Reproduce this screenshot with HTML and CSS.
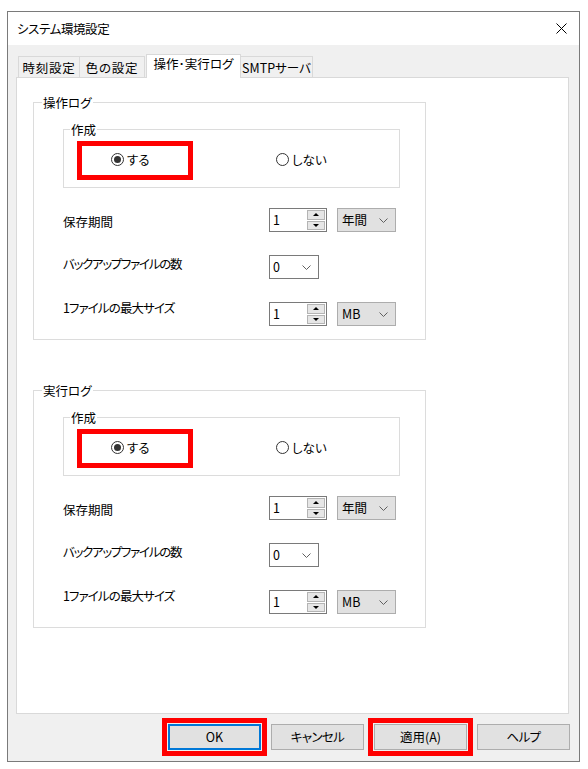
FILE: index.html
```html
<!DOCTYPE html>
<html lang="ja">
<head>
<meta charset="utf-8">
<title>システム環境設定</title>
<link rel="stylesheet" href="styles.css">
</head>
<body>
<div class="window">
  <div class="titlebar">
    <span class="title">システム環境設定</span>
    <svg class="close" width="11" height="11" viewBox="0 0 11 11"><path d="M0.5 0.5 L10.5 10.5 M10.5 0.5 L0.5 10.5" stroke="#000" stroke-width="1" fill="none"/></svg>
  </div>
  <div class="body">
    <div class="tabs">
      <div class="tab tab1">時刻設定</div>
      <div class="tab tab2">色の設定</div>
      <div class="tab active">操作･実行ログ</div>
      <div class="tab tab4">SMTPサーバ</div>
    </div>
    <div class="panel">
      <div class="group">
        <span class="legend">操作ログ</span>
        <div class="inner">
          <span class="legend small">作成</span>
          <div class="radio-row">
            <div class="mark">
              <span class="radio checked"></span><span class="rlabel">する</span>
            </div>
            <div class="radio-off">
              <span class="radio"></span><span class="rlabel">しない</span>
            </div>
          </div>
        </div>
        <div class="rows">
          <div class="row">
            <span class="label l1">保存期間</span>
            <div class="spin"><span class="spin-text">1</span><div class="spin-btns"><span class="sb up"></span><span class="sb down"></span></div></div>
            <div class="combo grey"><span>年間</span><svg class="chev" width="9" height="5" viewBox="0 0 9 5"><path d="M0.5 0.5 L4.5 4.5 L8.5 0.5" stroke="#606060" fill="none"/></svg></div>
          </div>
          <div class="row">
            <span class="label l2">バックアップファイルの数</span>
            <div class="combo white small"><span>0</span><svg class="chev" width="9" height="5" viewBox="0 0 9 5"><path d="M0.5 0.5 L4.5 4.5 L8.5 0.5" stroke="#606060" fill="none"/></svg></div>
          </div>
          <div class="row">
            <span class="label l3">1ファイルの最大サイズ</span>
            <div class="spin"><span class="spin-text">1</span><div class="spin-btns"><span class="sb up"></span><span class="sb down"></span></div></div>
            <div class="combo grey"><span>MB</span><svg class="chev" width="9" height="5" viewBox="0 0 9 5"><path d="M0.5 0.5 L4.5 4.5 L8.5 0.5" stroke="#606060" fill="none"/></svg></div>
          </div>
        </div>
      </div>
      <div class="group second">
        <span class="legend">実行ログ</span>
        <div class="inner">
          <span class="legend small">作成</span>
          <div class="radio-row">
            <div class="mark">
              <span class="radio checked"></span><span class="rlabel">する</span>
            </div>
            <div class="radio-off">
              <span class="radio"></span><span class="rlabel">しない</span>
            </div>
          </div>
        </div>
        <div class="rows">
          <div class="row">
            <span class="label l1">保存期間</span>
            <div class="spin"><span class="spin-text">1</span><div class="spin-btns"><span class="sb up"></span><span class="sb down"></span></div></div>
            <div class="combo grey"><span>年間</span><svg class="chev" width="9" height="5" viewBox="0 0 9 5"><path d="M0.5 0.5 L4.5 4.5 L8.5 0.5" stroke="#606060" fill="none"/></svg></div>
          </div>
          <div class="row">
            <span class="label l2">バックアップファイルの数</span>
            <div class="combo white small"><span>0</span><svg class="chev" width="9" height="5" viewBox="0 0 9 5"><path d="M0.5 0.5 L4.5 4.5 L8.5 0.5" stroke="#606060" fill="none"/></svg></div>
          </div>
          <div class="row">
            <span class="label l3">1ファイルの最大サイズ</span>
            <div class="spin"><span class="spin-text">1</span><div class="spin-btns"><span class="sb up"></span><span class="sb down"></span></div></div>
            <div class="combo grey"><span>MB</span><svg class="chev" width="9" height="5" viewBox="0 0 9 5"><path d="M0.5 0.5 L4.5 4.5 L8.5 0.5" stroke="#606060" fill="none"/></svg></div>
          </div>
        </div>
      </div>
    </div>
    <div class="buttons">
      <div class="btn default marked">OK</div>
      <div class="btn kana">キャンセル</div>
      <div class="btn marked">適用(A)</div>
      <div class="btn kana">ヘルプ</div>
    </div>
  </div>
</div>
</body>
</html>
```

FILE: styles.css
```css
* { box-sizing: border-box; }
html, body { margin: 0; padding: 0; background: #fff; }
body {
  font-family: "Noto Sans CJK JP", "Noto Sans", sans-serif;
  font-size: 12.5px;
  line-height: 16px;
  color: #000;
  font-feature-settings: "palt";
}
.window {
  margin: 11px 0 0 7px;
  width: 573px;
  height: 751px;
  border: 1px solid #7a7a7a;
  background: #f0f0f0;
  display: flex;
  flex-direction: column;
}
.titlebar {
  height: 33px;
  background: #fff;
  display: flex;
  align-items: center;
  justify-content: space-between;
  padding: 0 12px 0 9px;
  flex: none;
}
.title { font-size: 12.5px; letter-spacing: -0.4px; }
.close { display: block; }
.body {
  padding: 9px 10px 0 8px;
  display: flex;
  flex-direction: column;
  flex: 1;
}
.tabs {
  display: flex;
  align-items: flex-end;
  height: 23px;
  padding-left: 2px;
}
.tab {
  height: 21px;
  border: 1px solid #d9d9d9;
  border-bottom: none;
  background: #f0f0f0;
  display: flex;
  align-items: center;
  justify-content: center;
  padding-top: 1px;
  white-space: nowrap;
}
.tab1, .tab2 { letter-spacing: 0.8px; }
.tab1 { width: 62px; }
.tab2 { width: 66px; margin-left: -1px; }
.tab.active {
  width: 95px;
  height: 24px;
  margin-left: 1px;
  margin-bottom: -1px;
  background: #fff;
  position: relative;
  z-index: 2;
  padding-top: 0;
  padding-bottom: 5px;
}
.tab4 { width: 73px; margin-left: -1px; }
.panel {
  height: 637px;
  background: #fff;
  border: 1px solid #d9d9d9;
  padding: 24px 0 0 16px;
  flex: none;
}
.group {
  width: 393px;
  border: 1px solid #dcdcdc;
  padding: 0 0 13px 29px;
}
.group.second { margin-top: 50px; }
.legend {
  display: block;
  width: fit-content;
  margin: -8px 0 0 -21px;
  padding: 0 1px;
  background: #fff;
}
.legend.small { margin-left: 6px; }
.inner {
  margin-top: 18px;
  width: 337px;
  border: 1px solid #dcdcdc;
  padding-bottom: 7px;
}
.radio-row {
  display: flex;
  align-items: center;
  margin-top: 3px;
  padding-left: 13px;
}
.mark {
  width: 116px;
  height: 39px;
  border: 5px solid #ff0000;
  display: flex;
  align-items: center;
  padding: 0 0 2px 29px;
}
.radio-off {
  display: flex;
  align-items: center;
  margin-left: 83px;
  padding-bottom: 2px;
}
.radio {
  width: 13px;
  height: 13px;
  border: 1px solid #333;
  border-radius: 50%;
  background: #fff;
  display: flex;
  align-items: center;
  justify-content: center;
  flex: none;
}
.radio.checked::after {
  content: "";
  width: 7px;
  height: 7px;
  border-radius: 50%;
  background: #333;
}
.rlabel { margin-left: 3px; }
.rows {
  margin-top: 20px;
  display: flex;
  flex-direction: column;
  gap: 23px;
}
.row {
  display: flex;
  align-items: flex-start;
  height: 24px;
}
.label { width: 206px; flex: none; white-space: nowrap; }
.l1 { margin-top: 6px; }
.l2 { margin-top: 1px; letter-spacing: -1.3px; }
.l3 { margin-top: -2px; letter-spacing: -0.9px; }
.spin {
  width: 58px;
  height: 24px;
  border: 1px solid #7a7a7a;
  display: flex;
  background: #fff;
}
.spin-text {
  flex: 1;
  padding-left: 3px;
  line-height: 22px;
}
.spin-btns {
  width: 19px;
  display: flex;
  flex-direction: column;
  gap: 1px;
  padding: 1px 1px 1px 0;
}
.sb {
  flex: 1;
  background: #e6e6e6;
  border: 1px solid #b4b4b4;
  display: flex;
  align-items: center;
  justify-content: center;
}
.sb::after {
  content: "";
  width: 0;
  height: 0;
  border-left: 3px solid transparent;
  border-right: 3px solid transparent;
}
.sb.up::after { border-bottom: 3px solid #000; }
.sb.down::after { border-top: 3px solid #000; }
.combo {
  height: 24px;
  display: flex;
  align-items: center;
  justify-content: space-between;
  padding: 0 7px 0 4px;
}
.combo.grey {
  width: 59px;
  margin-left: 10px;
  background: #e1e1e1;
  border: 1px solid #adadad;
}
.combo.white {
  width: 50px;
  background: #fff;
  border: 1px solid #7a7a7a;
  padding-left: 3px;
}
.chev { display: block; }
.buttons {
  display: flex;
  justify-content: flex-end;
  gap: 10px;
  margin-top: 10px;
  margin-right: -1px;
}
.btn {
  width: 93px;
  height: 26px;
  background: #e1e1e1;
  border: 1px solid #adadad;
  display: flex;
  align-items: center;
  justify-content: center;
}
.btn.kana { letter-spacing: -0.6px; }
.btn.default { border: 2px solid #0078d7; }
.btn.marked { outline: 5px solid #ff0000; outline-offset: 1px; }
```
